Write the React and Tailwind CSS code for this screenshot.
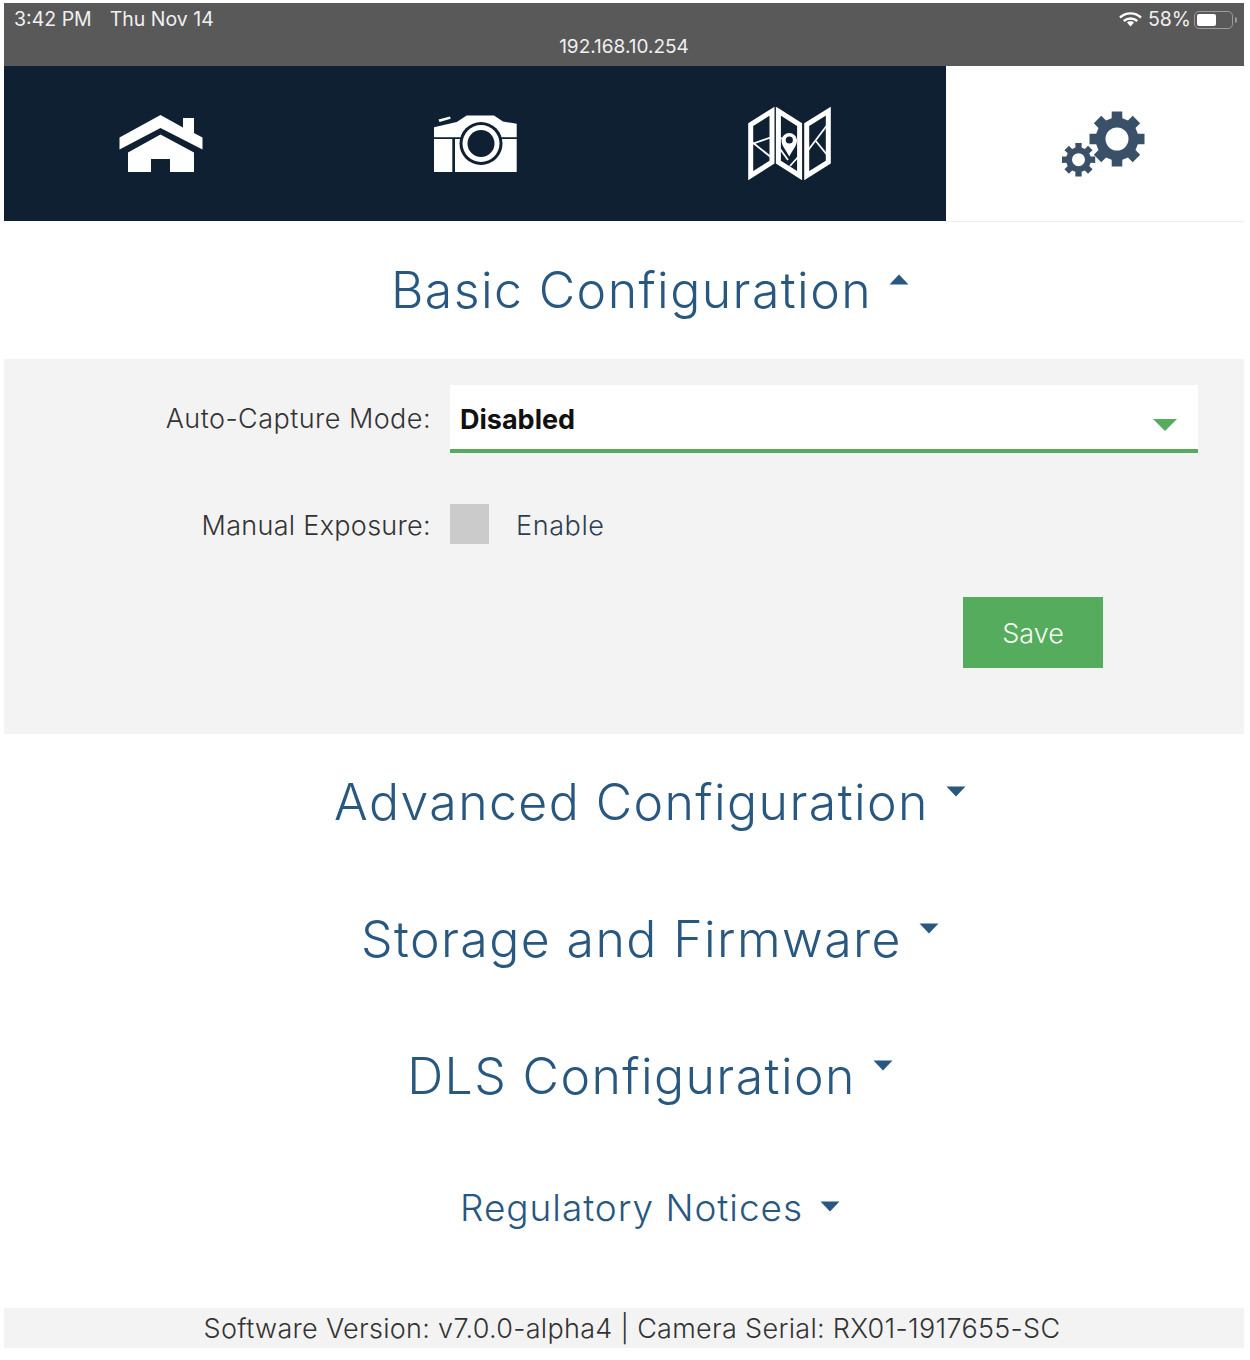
import React from 'react';

// builds a toothed wheel path, hole is cut with evenodd
function gearPath(cx, cy, outer, inner, hole, teeth) {
  const pts = [];
  const step = (Math.PI * 2) / teeth;
  for (let i = 0; i < teeth; i++) {
    const a = i * step - Math.PI / 2;
    const w = step * 0.24;
    const w2 = step * 0.32;
    pts.push([cx + inner * Math.cos(a - w2), cy + inner * Math.sin(a - w2)]);
    pts.push([cx + outer * Math.cos(a - w), cy + outer * Math.sin(a - w)]);
    pts.push([cx + outer * Math.cos(a + w), cy + outer * Math.sin(a + w)]);
    pts.push([cx + inner * Math.cos(a + w2), cy + inner * Math.sin(a + w2)]);
  }
  const ring = 'M' + pts.map((p) => p[0].toFixed(2) + ' ' + p[1].toFixed(2)).join('L') + 'Z';
  const circle = `M${cx - hole} ${cy}a${hole} ${hole} 0 1 0 ${hole * 2} 0a${hole} ${hole} 0 1 0 ${-hole * 2} 0Z`;
  return ring + circle;
}

function HomeIcon() {
  return (
    <svg width="84" height="60" viewBox="119 114 84 60" fill="#fff">
      <path d="M160.5 115L183 127.5V118H194V133L202.5 137.5V149.5L160.5 128L119.5 149.5V137.5Z" />
      <path d="M160.5 134.5L194 152.5V172H170V159H151V172H128V152.5Z" />
    </svg>
  );
}

function CameraIcon() {
  return (
    <svg width="84" height="58" viewBox="433 114.5 84 58">
      <path fill="#fff" d="M438.5 119L450 116L450.7 118.3L439.5 121.5Z" />
      <path fill="#fff" d="M434 126.7L456.7 121.5L466.7 115H494L503 121L516.7 123.3V136.7H434Z" />
      <path fill="#fff" d="M434 138.5H452.3V171.5H434Z" />
      <path fill="#fff" d="M455 138.5H516.7V171.5H455Z" />
      <circle cx="481" cy="143" r="21.5" fill="#0f2032" />
      <circle cx="481" cy="143" r="18.5" fill="#fff" />
      <circle cx="481" cy="143" r="13.5" fill="#0f2032" />
    </svg>
  );
}

function MapIcon() {
  return (
    <svg width="84" height="75" viewBox="748 106 84 75" fill="none" stroke="#fff">
      <g strokeWidth="5">
        <path d="M750.7 124.7L772 111.2V162.2L750.7 175.7Z" />
        <path d="M778.4 111.2L799.6 124.7V175.7L778.4 162.2Z" />
        <path d="M806.7 124.7L828.3 111.2V162.2L806.7 175.7Z" />
      </g>
      <g strokeWidth="1.8">
        <path d="M752 144L772 137M752 142L772 158" />
        <path d="M778 137L786 140M778 146L788 160M790 166L799 156" />
        <path d="M806 153L828 124M815 140L828 156" />
      </g>
      <path fill="#fff" stroke="none" d="M789.3 156.5C786 150 781.5 146 781.5 140A7.8 7.8 0 0 1 797 140C797 146 792.5 150 789.3 156.5Z" />
      <circle cx="789.3" cy="140" r="3.6" fill="#0f2032" stroke="none" />
    </svg>
  );
}

function GearsIcon() {
  return (
    <svg width="84" height="68" viewBox="1062 109 84 68" fill="#3a5068" fillRule="evenodd">
      <path d={gearPath(1117, 138, 28, 21.5, 11.5, 8)} />
      <path d={gearPath(1078.5, 158.7, 17, 12.5, 6.5, 8)} />
    </svg>
  );
}

function WifiIcon() {
  return (
    <svg width="23" height="15" viewBox="0 0 23 15" fill="none" stroke="#fff" strokeWidth="2.4">
      <path d="M1 5.5C7 0 16 0 22 5.5" />
      <path d="M4.8 9C8.5 5.6 14.5 5.6 18.2 9" />
      <path fill="#fff" stroke="none" d="M11.5 9.2C13 9.2 14.2 9.7 15 10.6L11.5 14.6L8 10.6C8.8 9.7 10 9.2 11.5 9.2Z" />
    </svg>
  );
}

function Caret({ up }) {
  return (
    <svg width="20" height="11" viewBox="0 0 20 11" fill="#28577f" className="shrink-0">
      <path d={up ? 'M10 0.5L19.5 10.5H0.5Z' : 'M0.5 0.5H19.5L10 10.5Z'} />
    </svg>
  );
}

function SectionHeading({ title, up, small }) {
  return (
    <div className={`flex items-center justify-center pl-[52px] ${small ? 'h-[126px]' : 'h-[137px]'}`}>
      <h2 className={`font-light text-[#28577f] ${small ? 'text-[37px] tracking-[0.95px]' : 'text-[50px] tracking-[1.4px]'}`}>{title}</h2>
      <span className={small ? 'ml-[17px] mb-[3px]' : 'ml-[17px] mb-[22px]'}>
        <Caret up={up} />
      </span>
    </div>
  );
}

export default function App() {
  return (
    <div className="w-[1250px] h-[1360px] bg-white pt-[3px] pl-[4px] pr-[6px] font-['Inter',sans-serif]">
      {/* ipad status bar */}
      <div className="h-[63px] bg-[#595959] text-[#f0f0f0] text-[19.5px]">
        <div className="flex justify-between h-[32px] pl-[10px] pr-[7px] pt-[5px]">
          <div className="flex gap-[18px] leading-[23px]">
            <span>3:42 PM</span>
            <span>Thu Nov 14</span>
          </div>
          <div className="flex items-center h-[23px]">
            <WifiIcon />
            <span className="ml-[6px] leading-[23px]">58%</span>
            <div className="ml-[3px] w-[39px] h-[18px] rounded-[5px] border border-[#9a9a9a] p-[2px]">
              <div className="w-[19px] h-full rounded-[2px] bg-white"></div>
            </div>
            <div className="ml-[2px] w-[2px] h-[6px] rounded-r-sm bg-[#9a9a9a]"></div>
          </div>
        </div>
        <div className="text-center text-[19px] leading-[24px]">192.168.10.254</div>
      </div>

      {/* top nav */}
      <div className="flex h-[156px]">
        <div className="w-[942px] grid grid-cols-3 h-[155px] bg-[#0f2032]">
          <div className="flex items-center justify-center"><HomeIcon /></div>
          <div className="flex items-center justify-center"><CameraIcon /></div>
          <div className="flex items-center justify-center pl-[2px]"><MapIcon /></div>
        </div>
        <div className="flex-1 flex items-center justify-center pl-[18px] border-b border-[#eeeeee]">
          <GearsIcon />
        </div>
      </div>

      <SectionHeading title="Basic Configuration" up />

      <div className="h-[375px] bg-[#f3f3f3] pt-[26px] pr-[46px] text-[27px]">
        <div className="flex items-center">
          <label className="w-[427px] text-right font-light text-[#333333] tracking-[0.45px] mt-[1px]">Auto-Capture Mode:</label>
          <div className="ml-[19px] flex-1 h-[68px] flex items-center justify-between bg-white border-b-[4px] border-[#55ac5c] pl-[10px] pr-[21px]">
            <span className="font-bold leading-[40px] text-[#111111] mt-[6px]">Disabled</span>
            <svg width="24" height="12" viewBox="0 0 24 12" fill="#55ac5c" className="mt-[16px]">
              <path d="M0 0H24L12 12Z" />
            </svg>
          </div>
        </div>
        <div className="flex items-center h-[40px] mt-[51px]">
          <label className="w-[427px] pt-[4px] text-right font-light leading-[34px] text-[#333333] tracking-[0.3px]">Manual Exposure:</label>
          <div className="ml-[19px] w-[39px] h-[40px] bg-[#cbcbcb]"></div>
          <span className="ml-[27px] pt-[4px] font-light leading-[34px] text-[#2b3f52] tracking-[0.6px]">Enable</span>
        </div>
        <div className="flex justify-end mt-[53px] pr-[95px]">
          <button className="w-[140px] h-[71px] pt-[4px] bg-[#55ac5c] text-[#f4fbf4] font-light">Save</button>
        </div>
      </div>

      <SectionHeading title="Advanced Configuration" />
      <SectionHeading title="Storage and Firmware" />
      <SectionHeading title="DLS Configuration" />
      <SectionHeading title="Regulatory Notices" small />

      <div className="mt-[37px] h-[40px] flex items-center justify-center pl-[16px] pt-[3px] bg-[#f3f3f3] text-[27px] tracking-[0.3px] font-light text-[#333333]">
        Software Version: v7.0.0-alpha4 | Camera Serial: RX01-1917655-SC
      </div>
    </div>
  );
}
